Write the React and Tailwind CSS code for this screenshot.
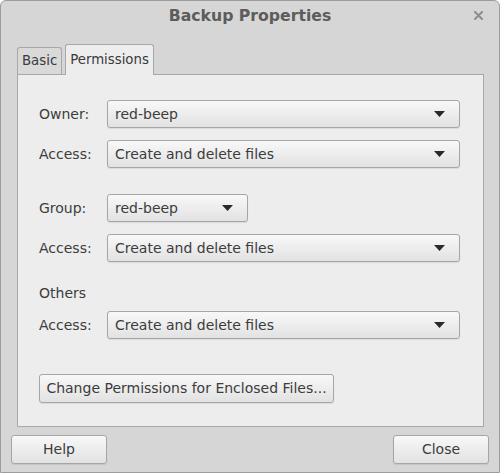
import React from "react";

const FONT = { fontFamily: '"DejaVu Sans", "Noto Sans", sans-serif' };

function Arrow() {
  return (
    <svg width="11" height="6" viewBox="0 0 11 6" className="shrink-0">
      <path d="M0 0 L11 0 L5.5 6 Z" fill="#2a2a2a" />
    </svg>
  );
}

function Combo({ value, className = "" }) {
  return (
    <div
      className={
        "h-[28px] flex items-center justify-between pl-[7px] pr-[14px] rounded-[3px] border border-[#a6a6a6] bg-gradient-to-b from-[#f8f8f8] to-[#e2e2e2] shadow-[0_1px_1px_rgba(0,0,0,0.08)] text-[#3c3c3c] text-[14px] " +
        className
      }
    >
      <span>{value}</span>
      <Arrow />
    </div>
  );
}

function Row({ label, children, className = "" }) {
  return (
    <div className={"flex items-center " + className}>
      <div className="w-[68px] text-[14px] text-[#3c3c3c]">{label}</div>
      {children}
    </div>
  );
}

function Button({ children, className = "" }) {
  return (
    <div
      className={
        "h-[29px] flex items-center justify-center rounded-[3px] border border-[#a6a6a6] bg-gradient-to-b from-[#f8f8f8] to-[#e2e2e2] shadow-[0_1px_1px_rgba(0,0,0,0.08)] text-[#3c3c3c] text-[14px] " +
        className
      }
    >
      {children}
    </div>
  );
}

export default function App() {
  return (
    <div style={FONT} className="w-[500px] h-[473px] overflow-hidden">
      <div className="w-full h-full flex flex-col bg-[#d6d6d6] border border-[#9c9c9c] rounded-t-[6px]">
        {/* title bar */}
        <div className="h-[29px] flex items-center shrink-0">
          <div className="w-[40px]" />
          <div className="flex-1 text-center font-bold text-[15.7px] text-[#5c5c5c]">
            Backup Properties
          </div>
          <div className="w-[40px] flex justify-end pr-[16px]">
            <svg width="9" height="9" viewBox="0 0 9 9">
              <path d="M1 1 L8 8 M8 1 L1 8" stroke="#8c8c8c" strokeWidth="2" strokeLinecap="round" />
            </svg>
          </div>
        </div>

        {/* tabs */}
        <div className="flex items-end pl-[16px] mt-[13px] h-[31px] shrink-0 relative z-10">
          <div className="h-[27px] px-[4px] flex items-center rounded-t-[3px] border border-b-0 border-[#a8a8a8] bg-[#d9d9d9] text-[13.3px] text-[#3a3a3a]">
            Basic
          </div>
          <div className="h-[31px] mb-[-1px] ml-[3px] px-[4px] flex items-center rounded-t-[3px] border border-b-0 border-[#a8a8a8] bg-[#ededed] text-[13.3px] text-[#3a3a3a]">
            Permissions
          </div>
        </div>

        {/* panel */}
        <div className="ml-[16px] mr-[15px] h-[353px] border border-[#a8a8a8] bg-[#ededed] shrink-0 pl-[21px] pr-[23px] pt-[25px]">
          <Row label="Owner:">
            <Combo value="red-beep" className="flex-1" />
          </Row>
          <Row label="Access:" className="mt-[12px]">
            <Combo value="Create and delete files" className="flex-1" />
          </Row>
          <Row label="Group:" className="mt-[26px]">
            <Combo value="red-beep" className="w-[141px]" />
          </Row>
          <Row label="Access:" className="mt-[12px]">
            <Combo value="Create and delete files" className="flex-1" />
          </Row>
          <div className="mt-[22px] h-[18px] text-[14px] text-[#3c3c3c] leading-[18px]">Others</div>
          <Row label="Access:" className="mt-[9px]">
            <Combo value="Create and delete files" className="flex-1" />
          </Row>
          <Button className="mt-[35px] w-[295px] text-[13.8px]">Change Permissions for Enclosed Files...</Button>
        </div>

        {/* bottom buttons */}
        <div className="flex justify-between px-[10px] mt-[8px]">
          <Button className="w-[96px]">Help</Button>
          <Button className="w-[96px]">Close</Button>
        </div>
      </div>
    </div>
  );
}
